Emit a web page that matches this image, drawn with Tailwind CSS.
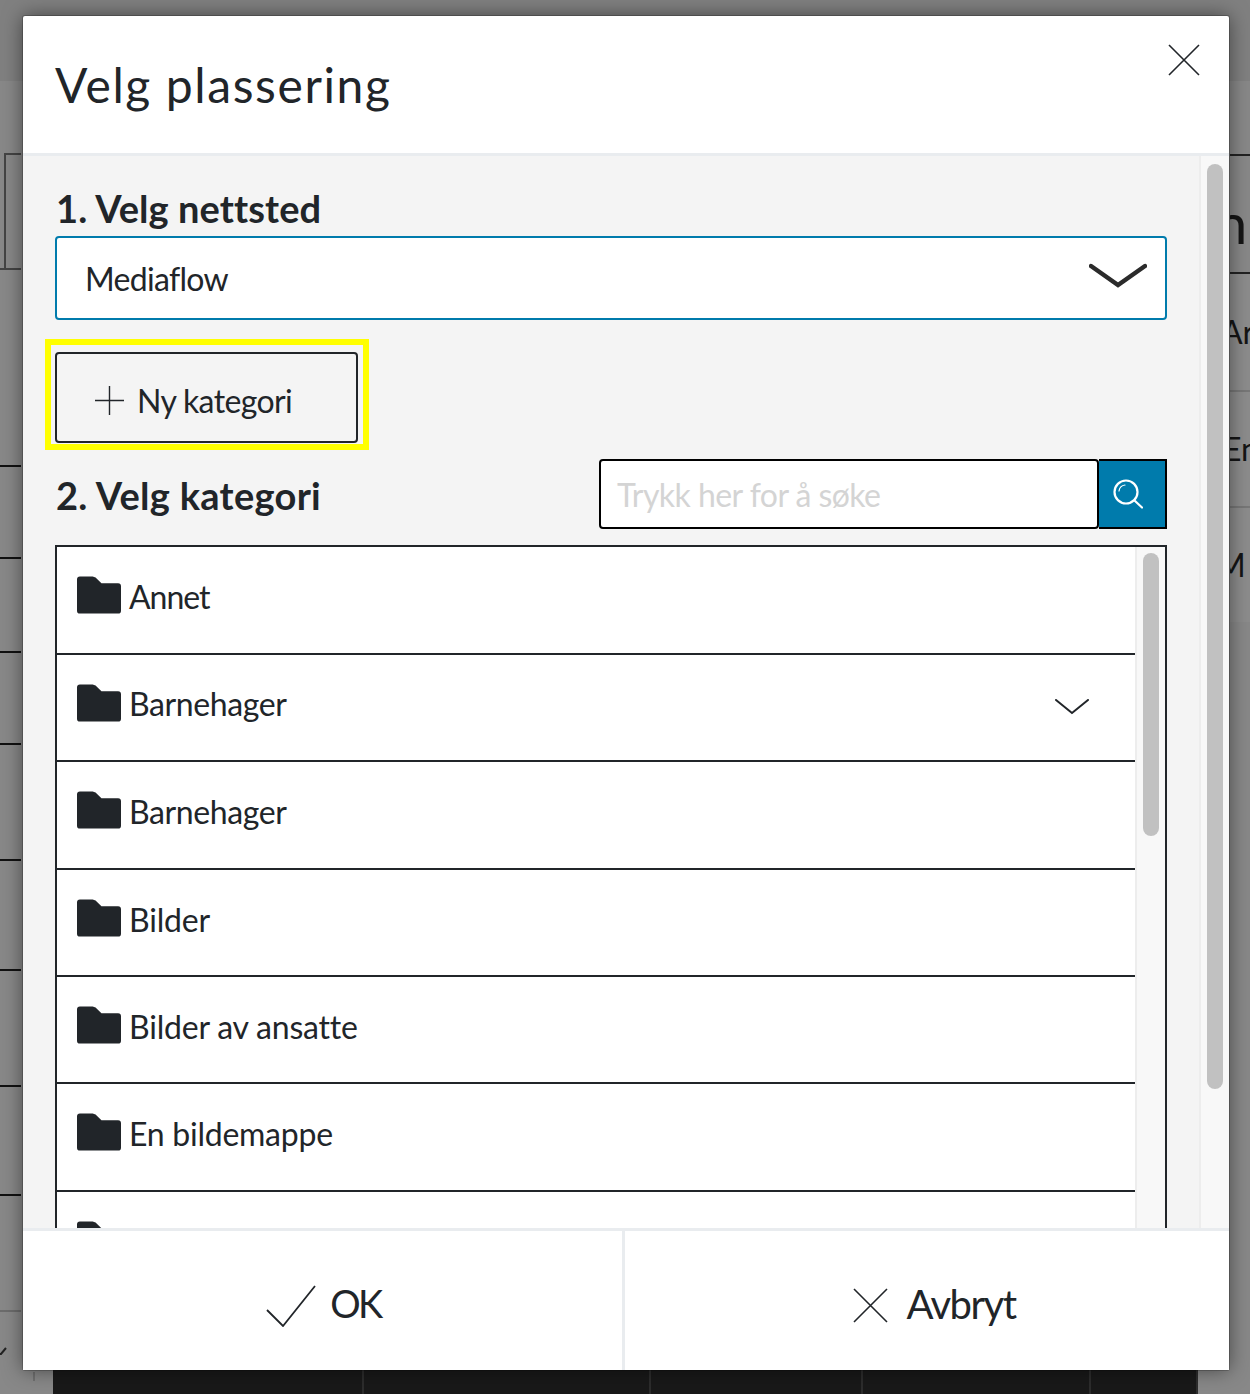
<!doctype html>
<html>
<head>
<meta charset="utf-8">
<script src="https://cdn.jsdelivr.net/npm/@tailwindcss/browser@4"></script>
</head>
<body class="font-['Lato','Noto_Sans',sans-serif]">
<div class="relative w-[1250px] h-[1394px] overflow-hidden bg-[#888888] text-[#212529] flex flex-col">

  <!-- page behind the modal -->
  <div class="h-[81px] shrink-0 bg-[#808080]"></div>
  <div class="flex-1 min-h-0 flex justify-between">
    <div class="w-[21px] pt-[72px]">
      <div class="ml-[4px] h-[115px] border-l-2 border-t-2 border-[#444]"></div>
      <div class="h-[197px] border-t-2 border-[#444]"></div>
      <div class="h-[92px] border-t-2 border-[#111]"></div>
      <div class="h-[94px] border-t-2 border-[#111]"></div>
      <div class="h-[92px] border-t-2 border-[#111]"></div>
      <div class="h-[116px] border-t-2 border-[#111]"></div>
      <div class="h-[110px] border-t-2 border-[#111]"></div>
      <div class="h-[116px] border-t-2 border-[#111]"></div>
      <div class="h-[109px] border-t-2 border-[#111]"></div>
      <div class="h-[116px] border-t-2 border-[#111]"></div>
      <div class="border-t-2 border-[#6c6c6c] pt-[34px]">
        <svg class="w-[7px] h-[9px]" viewBox="0 0 7 9" fill="none" stroke="#222" stroke-width="2"><path d="M-2 8 1 8 6 2"/></svg>
      </div>
    </div>
    <div class="w-[20px] pt-[73px] text-[#151515] text-[32px] overflow-hidden">
      <div class="h-[118px] border-t-2 border-[#222] flex items-center">
        <span class="text-[56px] leading-none -ml-[14px] mb-[-18px]">n</span>
      </div>
      <div class="h-[118px] border-t-2 border-[#222] flex items-center bg-[#8c8c8c]">
        <span class="-ml-[9px]">Ar</span>
      </div>
      <div class="h-[116px] border-t-2 border-[#777] flex items-center bg-[#8c8c8c]">
        <span class="-ml-[7px]">En</span>
      </div>
      <div class="h-[116px] border-t-2 border-[#777] flex items-center bg-[#8c8c8c]">
        <span class="-ml-[14px]">M</span>
      </div>
    </div>
  </div>
  <div class="h-[24px] shrink-0 flex pl-[33px]">
    <div class="w-[2px] h-[9px] mt-[2px] bg-[#707070]"></div>
    <div class="ml-[18px] w-[1145px] flex bg-[#191919]">
      <div class="w-[311px] border-r-2 border-[#2d2d2d]"></div>
      <div class="w-[287px] border-r-2 border-[#2d2d2d]"></div>
      <div class="w-[212px] border-r-2 border-[#2d2d2d]"></div>
      <div class="w-[228px] border-r-2 border-[#2d2d2d]"></div>
      <div class="w-[107px] border-r-2 border-[#2d2d2d]"></div>
    </div>
  </div>

  <!-- modal -->
  <div class="absolute left-[23px] top-[16px] w-[1206px] h-[1354px] flex flex-col bg-white rounded-[2px] shadow-[0_0_0_1px_rgba(0,0,0,0.2),0_0_20px_rgba(0,0,0,0.5)]">
    <div class="h-[140px] shrink-0 border-b-[3px] border-[#e9ecef] relative pl-[32px] pt-[37px]">
      <h1 class="text-[48px] leading-[64px] tracking-[1.6px]">Velg plassering</h1>
      <svg class="absolute left-[1145px] top-[28px] w-[32px] h-[32px]" viewBox="0 0 32 32" fill="none" stroke="#212529" stroke-width="1.6"><path d="M1 1 31 31M31 1 1 31"/></svg>
    </div>

    <div class="flex-1 min-h-0 flex bg-[#f4f4f4] overflow-hidden">
      <div class="flex-1 min-w-0 pl-[32px] pr-[32px] pt-[30px]">
        <h2 class="font-bold text-[38px] leading-[44px] tracking-[0.1px] pl-[1px]">1. Velg nettsted</h2>
        <div class="h-[84px] mt-[6px] bg-white border-2 border-[#007bac] rounded-[4px] flex items-center justify-between pl-[28px] pr-[18px]">
          <span class="text-[32px] tracking-[-0.7px] pt-[2px]">Mediaflow</span>
          <svg class="w-[58px] h-[26px] -mt-[4px]" viewBox="0 0 58 26" fill="none" stroke="#2b2b2b" stroke-width="4.5" stroke-linecap="round"><path d="M2 3 29 22 56 3"/></svg>
        </div>
        <div class="w-[324px] h-[111px] mt-[19px] -ml-[10px] border-[6px] border-[#ffff00] pt-[7px] pb-[1px] pl-[4px] pr-[5px]">
          <button class="w-full h-full border-2 border-[#212529] rounded-[4px] flex items-center pl-[38px] pt-[6px] gap-[13px] text-[32px] tracking-[-0.65px]">
            <svg class="w-[29px] h-[29px]" viewBox="0 0 29 29" fill="none" stroke="#212529" stroke-width="1.4"><path d="M14.5 0v29M0 14.5h29"/></svg>
            Ny kategori
          </button>
        </div>
        <div class="flex justify-between items-center mt-[9px] h-[70px]">
          <h2 class="font-bold text-[38px] leading-[44px] tracking-[0.3px] pl-[1px] pt-[2px]">2. Velg kategori</h2>
          <div class="flex h-[70px]">
            <div class="w-[500px] bg-white border-2 border-black rounded-[4px] flex items-center pl-[16px] pt-[2px] text-[32px] tracking-[-0.55px] text-[#d4d4d4]">Trykk her for å søke</div>
            <div class="w-[68px] bg-[#007bac] border-2 border-black border-l-0 flex items-center justify-center pr-[8px]">
              <svg class="w-[30px] h-[30px]" viewBox="0 0 30 30" fill="none" stroke="#fff" stroke-width="2.2" stroke-linecap="round"><circle cx="13" cy="13" r="11.5"/><path d="M21.5 21.5 29 28.5"/><path d="M6 12a7 7 0 0 1 6-6" stroke-width="1.2"/></svg>
            </div>
          </div>
        </div>
        <div class="mt-[16px] border-2 border-[#212529] border-b-0 bg-white flex h-[700px] overflow-hidden">
          <ul class="flex-1 min-w-0 text-[32px]">
            <li class="h-[108px] border-b-2 border-[#212529] flex items-center pl-[20px] pb-[7px] gap-[8px]">
              <svg class="w-[44px] h-[38px] -mt-[4px]" viewBox="0 0 45 38" fill="#212529"><path d="M3 0h13l3 1 6 6h17a3 3 0 0 1 3 3v25a3 3 0 0 1-3 3H3a3 3 0 0 1-3-3V3a3 3 0 0 1 3-3z"/></svg>
              <span class="tracking-[-1px]">Annet</span>
            </li>
            <li class="h-[107px] border-b-2 border-[#212529] flex items-center pl-[20px] pb-[7px] gap-[8px] relative">
              <svg class="w-[44px] h-[38px] -mt-[2px]" viewBox="0 0 45 38" fill="#212529"><path d="M3 0h13l3 1 6 6h17a3 3 0 0 1 3 3v25a3 3 0 0 1-3 3H3a3 3 0 0 1-3-3V3a3 3 0 0 1 3-3z"/></svg>
              <span class="tracking-[-0.4px]">Barnehager</span>
              <svg class="absolute right-[46px] top-[44px] w-[34px] h-[16px]" viewBox="0 0 34 16" fill="none" stroke="#212529" stroke-width="2" stroke-linecap="round"><path d="M1 1l16 13L33 1"/></svg>
            </li>
            <li class="h-[108px] border-b-2 border-[#212529] flex items-center pl-[20px] pb-[7px] gap-[8px]">
              <svg class="w-[44px] h-[38px] -mt-[4px]" viewBox="0 0 45 38" fill="#212529"><path d="M3 0h13l3 1 6 6h17a3 3 0 0 1 3 3v25a3 3 0 0 1-3 3H3a3 3 0 0 1-3-3V3a3 3 0 0 1 3-3z"/></svg>
              <span class="tracking-[-0.4px]">Barnehager</span>
            </li>
            <li class="h-[107px] border-b-2 border-[#212529] flex items-center pl-[20px] pb-[5px] gap-[8px]">
              <svg class="w-[44px] h-[38px] -mt-[4px]" viewBox="0 0 45 38" fill="#212529"><path d="M3 0h13l3 1 6 6h17a3 3 0 0 1 3 3v25a3 3 0 0 1-3 3H3a3 3 0 0 1-3-3V3a3 3 0 0 1 3-3z"/></svg>
              <span class="tracking-[-0.2px]">Bilder</span>
            </li>
            <li class="h-[107px] border-b-2 border-[#212529] flex items-center pl-[20px] pb-[5px] gap-[8px]">
              <svg class="w-[44px] h-[38px] -mt-[4px]" viewBox="0 0 45 38" fill="#212529"><path d="M3 0h13l3 1 6 6h17a3 3 0 0 1 3 3v25a3 3 0 0 1-3 3H3a3 3 0 0 1-3-3V3a3 3 0 0 1 3-3z"/></svg>
              <span class="tracking-[-0.2px]">Bilder av ansatte</span>
            </li>
            <li class="h-[108px] border-b-2 border-[#212529] flex items-center pl-[20px] pb-[7px] gap-[8px]">
              <svg class="w-[44px] h-[38px] -mt-[4px]" viewBox="0 0 45 38" fill="#212529"><path d="M3 0h13l3 1 6 6h17a3 3 0 0 1 3 3v25a3 3 0 0 1-3 3H3a3 3 0 0 1-3-3V3a3 3 0 0 1 3-3z"/></svg>
              <span class="tracking-[-0.25px]">En bildemappe</span>
            </li>
            <li class="h-[108px] flex items-start pl-[20px] pt-[29px]">
              <svg class="w-[44px] h-[38px]" viewBox="0 0 45 38" fill="#212529"><path d="M3 0h13l3 1 6 6h17a3 3 0 0 1 3 3v25a3 3 0 0 1-3 3H3a3 3 0 0 1-3-3V3a3 3 0 0 1 3-3z"/></svg>
            </li>
          </ul>
          <div class="w-[30px] shrink-0 bg-[#f8f8f8] border-l-2 border-[#ededed] pt-[6px] pl-[6px]">
            <div class="w-[16px] h-[283px] rounded-full bg-[#c1c1c1]"></div>
          </div>
        </div>
      </div>
      <div class="w-[30px] shrink-0 bg-[#f8f8f8] border-l-2 border-[#ededed] pt-[8px] pl-[6px]">
        <div class="w-[16px] h-[925px] rounded-full bg-[#c1c1c1]"></div>
      </div>
    </div>

    <div class="h-[142px] shrink-0 border-t-[3px] border-[#e9ecef] flex text-[40px] bg-white">
      <button class="w-[602px] flex items-center justify-center gap-[14px] border-r-[3px] border-[#e9ecef] pt-[10px] pl-[2px]">
        <svg class="w-[50px] h-[42px]" viewBox="0 0 50 42" fill="none" stroke="#212529" stroke-width="1.8"><path d="M1 25l16 16L49 1"/></svg>
        <span class="text-[38px] tracking-[-2.5px] pb-[4px]">OK</span>
      </button>
      <button class="flex-1 flex items-center justify-center gap-[18px] pt-[10px] pl-[15px]">
        <svg class="w-[35px] h-[35px]" viewBox="0 0 35 35" fill="none" stroke="#212529" stroke-width="1.6"><path d="M1 1l33 33M34 1 1 34"/></svg>
        <span class="tracking-[-1.5px] pb-[4px]">Avbryt</span>
      </button>
    </div>
  </div>
</div>
</body>
</html>
